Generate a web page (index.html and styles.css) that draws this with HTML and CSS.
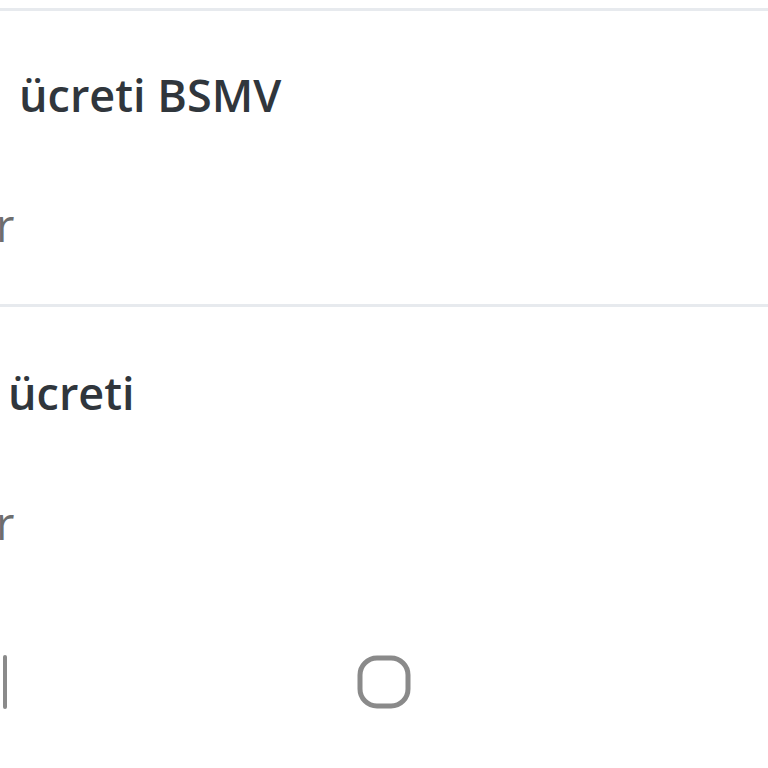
FILE: index.html
```html
<!DOCTYPE html>
<html lang="tr">
<head>
    <meta charset="UTF-8">
    <meta name="viewport" content="width=device-width, initial-scale=1.0">
    <title>Ücretler</title>
    <link rel="stylesheet" href="styles.css">
</head>
<body>
    <div class="screen">
        <!-- Liste -->
        <div class="fee-list">
            <div class="fee-item">
                <p class="fee-title">ücreti BSMV</p>
                <p class="fee-sub">r</p>
            </div>
            <div class="fee-item fee-item-alt">
                <p class="fee-title">ücreti</p>
                <p class="fee-sub">r</p>
            </div>
        </div>

        <!-- Barre de navigation -->
        <div class="nav-bar">
            <svg class="nav-recent" width="40" height="56" viewBox="0 0 40 56">
                <line x1="4" y1="3" x2="4" y2="53" />
                <line x1="20" y1="3" x2="20" y2="53" />
                <line x1="36" y1="3" x2="36" y2="53" />
            </svg>
            <svg class="nav-home" width="58" height="58" viewBox="0 0 58 58">
                <rect x="5" y="5" width="48" height="48" rx="17" ry="17" />
            </svg>
            <svg class="nav-back" width="30" height="56" viewBox="0 0 30 56">
                <polyline points="26,6 6,28 26,50" />
            </svg>
        </div>
    </div>
</body>
</html>
```

FILE: styles.css
```css
* {
    margin: 0;
    padding: 0;
    box-sizing: border-box;
}

body {
    font-family: "Open Sans", "Noto Sans", Arial, sans-serif;
    background-color: #fff;
    width: 768px;
    height: 768px;
    overflow: hidden;
}

.screen {
    padding-top: 8px;
}

.fee-item {
    border-top: 3px solid #e7eaee;
    height: 296px;
    padding-top: 56px;
    overflow: hidden;
    white-space: nowrap;
}

.fee-item-alt {
    padding-top: 58px;
}

.fee-title {
    font-size: 45px;
    line-height: 56px;
    font-weight: 600;
    color: #30363c;
    padding-left: 19px;
}

.fee-item-alt .fee-title {
    padding-left: 8px;
}

.fee-sub {
    font-size: 45px;
    line-height: 56px;
    font-weight: 400;
    color: #6e6e6e;
    margin-top: 74px;
    margin-left: -4px;
}

.nav-bar {
    height: 164px;
    display: grid;
    grid-template-columns: 1fr auto 1fr;
    align-items: center;
    overflow: hidden;
}

.nav-bar svg {
    fill: none;
    stroke: #8a8a8a;
    stroke-linecap: round;
    stroke-linejoin: round;
}

.nav-recent {
    justify-self: start;
    margin-left: -31px;
    stroke-width: 4;
}

.nav-home {
    stroke-width: 5;
}

.nav-back {
    justify-self: end;
    margin-right: -28px;
    stroke-width: 4;
}
```
